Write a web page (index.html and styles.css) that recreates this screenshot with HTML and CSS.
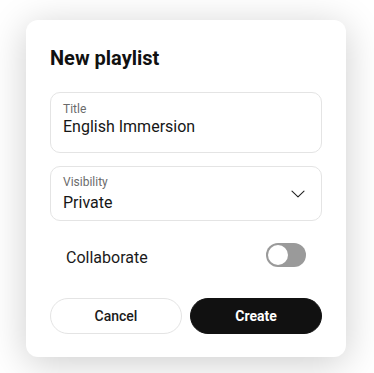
FILE: index.html
```html
<!DOCTYPE html>
<html lang="en">
<head>
<meta charset="utf-8">
<title>New playlist</title>
<link rel="stylesheet" href="styles.css">
</head>
<body>
<div class="dialog">
  <h1 class="heading">New playlist</h1>
  <div class="field field-title">
    <div class="label">Title</div>
    <div class="value value-title">English Immersion</div>
  </div>
  <div class="field field-select">
    <div class="select-text">
      <div class="label">Visibility</div>
      <div class="value value-select">Private</div>
    </div>
    <svg class="chevron" width="14" height="8" viewBox="0 0 14 8"><path d="M1 1.2 L7 6.8 L13 1.2" fill="none" stroke="#222" stroke-width="1.1" stroke-linecap="round" stroke-linejoin="round"/></svg>
  </div>
  <div class="toggle-row">
    <span class="toggle-label">Collaborate</span>
    <span class="toggle"><span class="knob"></span></span>
  </div>
  <div class="actions">
    <button class="btn btn-cancel">Cancel</button>
    <button class="btn btn-create">Create</button>
  </div>
</div>
</body>
</html>
```

FILE: styles.css
```css
* { box-sizing: border-box; }
html, body { margin: 0; background: #ffffff; }
html { min-height: 100%; }
body {
  min-height: 373px;
  padding: 20px 0 0 26px;
  font-family: Roboto, "Liberation Sans", sans-serif;
  color: #141414;
}
.dialog {
  width: 320px;
  height: 337px;
  background: #ffffff;
  border-radius: 12px;
  padding: 24px;
  box-shadow: 0 6px 38px rgba(0, 0, 0, 0.2);
}
.heading {
  margin: 0;
  font-size: 20px;
  line-height: 28px;
  font-weight: 700;
  color: #111;
}
.field {
  border: 1px solid #e4e4e4;
  border-radius: 10px;
  padding: 0 12px;
}
.field-title {
  margin-top: 20px;
  height: 61px;
  padding-top: 9px;
}
.label {
  font-size: 12px;
  line-height: 14px;
  color: #6b6b6b;
}
.value {
  font-size: 16px;
  line-height: 20px;
  color: #161616;
}
.value-title { margin-top: 1px; }
.field-select {
  margin-top: 13px;
  height: 55px;
  padding-top: 8px;
  display: flex;
  align-items: flex-start;
  justify-content: space-between;
}
.value-select { margin-top: 4px; }
.chevron {
  margin-top: 15px;
  margin-right: 4px;
}
.toggle-row {
  height: 48px;
  margin-top: 10px;
  padding: 0 16px;
  display: flex;
  align-items: center;
  justify-content: space-between;
}
.toggle-label {
  font-size: 16px;
  line-height: 20px;
  padding-top: 5px;
  color: #1a1a1a;
}
.toggle {
  width: 40px;
  height: 24px;
  border-radius: 12px;
  background: #9a9a9a;
  padding: 2px;
  display: flex;
}
.knob {
  width: 20px;
  height: 20px;
  border-radius: 50%;
  background: #ffffff;
}
.actions {
  margin-top: 19px;
  display: flex;
  gap: 8px;
}
.btn {
  flex: 1;
  height: 36px;
  border-radius: 18px;
  font-family: Roboto, "Liberation Sans", sans-serif;
  font-size: 14px;
  padding: 0;
  cursor: pointer;
}
.btn-cancel {
  background: #ffffff;
  border: 1px solid #e4e4e4;
  color: #1a1a1a;
  font-weight: 500;
}
.btn-create {
  background: #111111;
  border: 1px solid #111111;
  color: #ffffff;
  font-weight: 700;
}
```
